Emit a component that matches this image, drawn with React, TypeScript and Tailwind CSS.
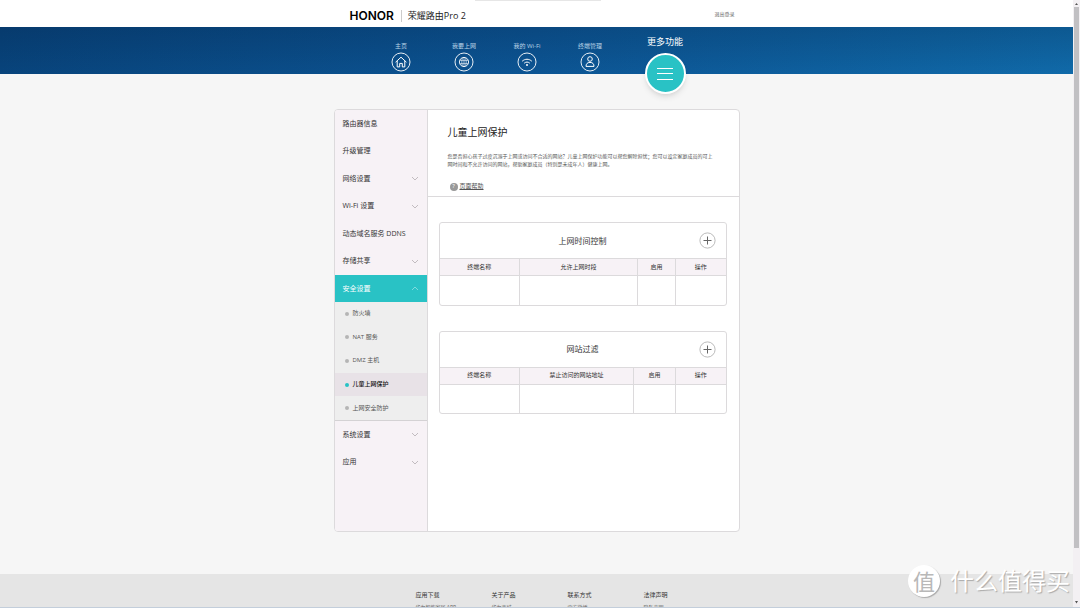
import type { ReactNode } from "react";

type MenuItem = { label: string; expandable?: boolean };

const TOP_MENU: MenuItem[] = [
  { label: "路由器信息" },
  { label: "升级管理" },
  { label: "网络设置", expandable: true },
  { label: "Wi-Fi 设置", expandable: true },
  { label: "动态域名服务 DDNS" },
  { label: "存储共享", expandable: true },
];

const SECURITY_MENU = ["防火墙", "NAT 服务", "DMZ 主机", "儿童上网保护", "上网安全防护"];

const BOTTOM_MENU: MenuItem[] = [
  { label: "系统设置", expandable: true },
  { label: "应用", expandable: true },
];

const FOOTER = [
  { title: "应用下载", link: "华为智能家居 APP" },
  { title: "关于产品", link: "华为商城" },
  { title: "联系方式", link: "官方微博" },
  { title: "法律声明", link: "隐私声明" },
];

function Chevron({ up = false }: { up?: boolean }) {
  return (
    <svg viewBox="0 0 8 5" className="h-[5px] w-2" fill="none" stroke="currentColor" strokeWidth="0.7" aria-hidden="true">
      <path d={up ? "M1 4 4 1l3 3" : "M1 1l3 3 3-3"} />
    </svg>
  );
}

function NavLink({ label, children }: { label: string; children: ReactNode }) {
  return (
    <a href="#" className="flex w-[63px] flex-col items-center gap-px pt-[15px] text-[6px] leading-[9px] text-[#b9d3e6]">
      <span>{label}</span>
      <svg viewBox="0 0 20 20" className="size-5 text-white" fill="none" stroke="currentColor" strokeWidth="1" aria-hidden="true">
        <circle cx="10" cy="10" r="9" strokeWidth="0.9" />
        {children}
      </svg>
    </a>
  );
}

function MenuList({ items }: { items: MenuItem[] }) {
  return (
    <>
      {items.map((item) => (
        <li key={item.label} className="flex flex-1">
          <a href="#" className="flex flex-1 items-center justify-between px-2">
            {item.label}
            {item.expandable && (
              <span className="text-[#aaa5a9]">
                <Chevron />
              </span>
            )}
          </a>
        </li>
      ))}
    </>
  );
}

function RuleTable({ title, columns, widths }: { title: string; columns: string[]; widths: string[] }) {
  return (
    <section className="overflow-hidden rounded-[3px] border border-[#dcdadc]">
      <header className="grid h-[35px] grid-cols-[1fr_auto_1fr] items-center px-[10px]">
        <h2 className="col-start-2 text-[8px] leading-[12px] text-[#333]">{title}</h2>
        <button type="button" aria-label={`添加${title}`} className="justify-self-end text-[#666]">
          <svg viewBox="0 0 17 17" className="size-[17px]" fill="none" aria-hidden="true">
            <circle cx="8.5" cy="8.5" r="7.6" stroke="#aaa" strokeWidth="0.8" />
            <path d="M8.5 4.5v8M4.5 8.5h8" stroke="currentColor" strokeWidth="1" />
          </svg>
        </button>
      </header>
      <table className="w-full table-fixed border-collapse">
        <thead className="bg-[#f7f2f6] text-[6px] leading-[9px] text-[#333]">
          <tr className="h-[17px]">
            {columns.map((column, i) => (
              <th key={column} scope="col" className={`${widths[i]} border-y border-l border-[#dcdadc] p-0 font-normal first:border-l-0`}>
                {column}
              </th>
            ))}
          </tr>
        </thead>
        <tbody>
          <tr className="h-[29px]">
            {columns.map((column) => (
              <td key={column} className="border-l border-[#dcdadc] p-0 first:border-l-0" />
            ))}
          </tr>
        </tbody>
      </table>
    </section>
  );
}

export default function App() {
  return (
    <div className="relative flex h-screen overflow-hidden bg-[#f6f6f6] font-['Open_Sans','Noto_Sans_CJK_SC',sans-serif] text-[7px] leading-[10px] text-[#333]">
      <div className="min-w-0 flex-1">
        <header className="bg-white">
          <div className="mx-auto flex h-[27px] max-w-[406px] items-center pt-1 pr-[5px] pl-4">
            <span className="font-['Inter',sans-serif] text-[12px] leading-[14px] font-semibold text-black">HONOR</span>
            <span className="ml-[7px] h-3 w-px bg-[#ccc]" />
            <span className="ml-[6px] text-[9px] leading-[14px] text-[#222]">荣耀路由Pro 2</span>
            <a href="#" className="mb-1 ml-auto text-[5px] leading-[8px] text-[#666]">
              退出登录
            </a>
          </div>
        </header>

        <nav className="h-[47px] bg-[linear-gradient(to_bottom,rgba(0,20,50,0.2),transparent),linear-gradient(to_right,#08447c,#0c5594_50%,#106aa9)]">
          <div className="mx-auto flex max-w-[406px] pl-9">
            <NavLink label="主页">
              <path d="M4.6 10.2 10 5.2l5.4 5M6.2 9v5.9h2.5v-3.5h2.6v3.5h2.5V9" />
            </NavLink>
            <NavLink label="我要上网">
              <circle cx="10" cy="10" r="4.600" strokeWidth="0.9" />
              <ellipse cx="10" cy="10" rx="2.200" ry="4.600" strokeWidth="0.6" />
              <path d="M10 5.4v9.2M5.8 8.400h8.400M5.8 11.600h8.400" strokeWidth="0.6" />
            </NavLink>
            <NavLink label="我的 Wi-Fi">
              <path d="M5.2 9.2c2.8-2.6 6.800-2.6 9.600 0M7.2 11.2c1.7-1.5 3.900-1.5 5.600 0" />
              <circle cx="10" cy="13.1" r="1" fill="currentColor" stroke="none" />
            </NavLink>
            <NavLink label="终端管理">
              <circle cx="10" cy="7" r="2.3" />
              <path d="M6 14.4c0-2.4 1.2-4 4-4s4 1.6 4 4z" />
            </NavLink>
            <a href="#" className="ml-3 flex w-[63px] flex-col items-center gap-[5px] pt-[9px] text-[9px] leading-[12px] text-white">
              更多功能
              <span className="flex size-[41px] items-center justify-center rounded-full border-2 border-white bg-[#29c2c5] shadow-md">
                <svg viewBox="0 0 16 14" className="h-[14px] w-4" stroke="white" strokeWidth="1" aria-hidden="true">
                  <path d="M0 1.5h16M0 6.500h16M0 12.5h16" />
                </svg>
              </span>
            </a>
          </div>
        </nav>

        <div className="mx-auto mt-[35px] flex min-h-[423px] max-w-[406px] overflow-hidden rounded-[4px] border border-[#dcdadc] bg-white">
          <aside className="w-[93px] shrink-0 border-r border-[#dcdadc] bg-[#f7f2f6]">
            <ul className="flex h-[165px] flex-col">
              <MenuList items={TOP_MENU} />
            </ul>
            <button type="button" aria-expanded="true" className="flex h-[27px] w-full items-center justify-between bg-[#29c2c5] px-2 text-white">
              安全设置
              <span className="text-[#a4e4e6]">
                <Chevron up />
              </span>
            </button>
            <ul className="flex h-[119px] flex-col border-b border-[#d4d2d4] bg-[#eeeeee] text-[6px] leading-[9px] text-[#555]">
              {SECURITY_MENU.map((label) => {
                const active = label === "儿童上网保护";
                return (
                  <li key={label} className="flex flex-1">
                    <a
                      href="#"
                      aria-current={active ? "page" : undefined}
                      className={`flex flex-1 items-center gap-1 pl-[10px] ${active ? "bg-[#e8e2e7] font-medium text-[#111]" : ""}`}
                    >
                      <span className={`size-1 rounded-full ${active ? "bg-[#29c2c5]" : "bg-[#b5b5b5]"}`} />
                      {label}
                    </a>
                  </li>
                );
              })}
            </ul>
            <ul className="flex h-[55px] flex-col">
              <MenuList items={BOTTOM_MENU} />
            </ul>
          </aside>

          <main className="min-w-0 flex-1">
            <div className="border-b border-[#dcdadc] px-5 pt-[15px] pb-[5px]">
              <h1 className="text-[10px] leading-[15px] text-[#222]">儿童上网保护</h1>
              <p className="mt-3 pr-[3px] text-[5px] leading-[8px] text-[#555]">
                您是否担心孩子过度沉溺于上网或访问不合适的网站？儿童上网保护功能可以帮您解除担忧；您可以设定家庭成员的可上网时间和不允许访问的网站，帮助家庭成员（特别是未成年人）健康上网。
              </p>
              <a href="#" className="mt-[14px] ml-[2px] flex items-center gap-[2px] text-[6px] leading-[9px] text-[#555]">
                <span className="flex size-2 items-center justify-center rounded-full bg-[#999] text-white">?</span>
                <span className="underline">页面帮助</span>
              </a>
            </div>
            <div className="flex flex-col gap-[25px] pt-[25px] pr-3 pl-[11px]">
              <RuleTable
                title="上网时间控制"
                columns={["终端名称", "允许上网时段", "启用", "操作"]}
                widths={["w-[28%]", "w-auto", "w-[38px]", "w-[50px]"]}
              />
              <RuleTable
                title="网站过滤"
                columns={["终端名称", "禁止访问的网站地址", "启用", "操作"]}
                widths={["w-[28%]", "w-auto", "w-[42px]", "w-[50px]"]}
              />
            </div>
          </main>
        </div>

        <footer className="mt-[42px] h-20 bg-[#e5e5e5] pt-4">
          <div className="mx-auto grid max-w-[406px] grid-cols-[76px_76px_76px_76px] pl-[82px]">
            {FOOTER.map(({ title, link }) => (
              <div key={title}>
                <h3 className="text-[6px] leading-[10px]">{title}</h3>
                <a href="#" className="mt-[3px] block text-[5px] leading-[8px] text-[#666]">
                  {link}
                </a>
              </div>
            ))}
          </div>
        </footer>
      </div>

      <div className="flex w-[7px] shrink-0 flex-col items-center bg-[#f3f0f3] text-[#555]" aria-hidden="true">
        <svg viewBox="0 0 7 7" className="size-[7px]" fill="currentColor">
          <path d="M2 5h3L3.5 3z" />
        </svg>
        <span className="h-[541px] w-[5px] bg-[#c1c0c3]" />
        <svg viewBox="0 0 7 7" className="mt-auto mb-[2px] size-[7px]" fill="currentColor">
          <path d="M2 2h3L3.5 4.5z" />
        </svg>
      </div>

      {/* edges of the surrounding desktop */}
      <div className="absolute top-0 left-[44%] h-px w-[126px] bg-[#e6e6e6]" />
      <div className="absolute inset-x-0 bottom-0 h-px bg-[#c3cedb]" />

      <div className="absolute right-[10px] bottom-[10px] flex items-center gap-[10px] text-[24px] leading-[34px] text-white text-shadow-[1px_1px_1px_#aaa]">
        <span className="flex size-8 items-center justify-center rounded-full bg-white text-[22px] text-[#b8b8b8] shadow-[1px_1px_1px_#aaa] text-shadow-none">
          值
        </span>
        什么值得买
      </div>
    </div>
  );
}
